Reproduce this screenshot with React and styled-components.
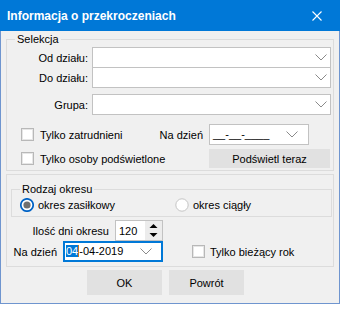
import React from 'react';
import styled, { createGlobalStyle } from 'styled-components';

const Global = createGlobalStyle`
  html, body { margin: 0; padding: 0; background: #ffffff; }
  body {
    font-family: "Liberation Sans", Arial, sans-serif;
    font-size: 11px;
    color: #000;
  }
  * { box-sizing: border-box; }
`;

const Window = styled.div`
  width: 340px;
  height: 304px;
  background: #f0f0f0;
  border: 1px solid #6f95cf;
  border-top: none;
  display: flex;
  flex-direction: column;
`;

const TitleBar = styled.div`
  height: 31px;
  margin: 0 -1px;
  background: #0078d7;
  color: #fff;
  font-weight: bold;
  font-size: 12px;
  display: flex;
  align-items: center;
  justify-content: space-between;
  padding: 0 18px 0 7px;
`;

const Body = styled.div`
  padding: 0 5px 8px 5px;
  display: flex;
  flex-direction: column;
`;

const Group = styled.fieldset`
  margin: 0;
  padding: 0 ${p => p.$pr ?? 2}px ${p => p.$pb ?? 2}px 0;
  border: 1px solid #dcdcdc;
  min-width: 0;
`;

const Legend = styled.legend`
  margin-left: 8px;
  padding: 0 2px;
  line-height: 16px;
  font-size: 11px;
`;

const Panel = styled.div`
  margin-top: 3px;
  border: 1px solid #dcdcdc;
  padding: 6px 1px 4px 4px;
  display: flex;
  flex-direction: column;
`;

const FieldRow = styled.div`
  display: grid;
  grid-template-columns: 81px 239px;
  column-gap: 4px;
  align-items: center;
  height: 21px;
  margin-top: ${p => p.$mt || 0}px;
`;

const Label = styled.span`
  text-align: right;
  white-space: nowrap;
  ${p => p.$w ? `width: ${p.$w}px; flex: none; margin-right: 6px;` : ''}
`;

const Combo = styled.div`
  height: 21px;
  width: ${p => p.$w ? `${p.$w}px` : 'auto'};
  flex: none;
  background: #fff;
  border: ${p => p.$focus ? '2px solid #0078d7' : '1px solid #c2c2c2'};
  display: flex;
  align-items: center;
  padding-left: ${p => p.$focus ? 1 : 3}px;
  padding-right: ${p => p.$pr ?? 3}px;
  margin-right: ${p => p.$mr || 0}px;
  white-space: nowrap;
`;

const ComboText = styled.span`
  flex: 1;
  line-height: 15px;
`;

const Selected = styled.span`
  background: #0078d7;
  color: #fff;
  border-right: 1px solid #c8751e;
`;

const CheckRow = styled.div`
  display: flex;
  align-items: center;
  height: ${p => p.$h || 21}px;
  margin-top: ${p => p.$mt || 0}px;
  padding-left: 14px;
`;

const CheckItem = styled.label`
  display: flex;
  align-items: center;
  flex: ${p => p.$grow ? 1 : 'none'};
  margin-left: ${p => p.$ml || 0}px;
  white-space: nowrap;
`;

const Box = styled.span`
  width: 13px;
  height: 13px;
  flex: none;
  background: #fff;
  border: 1px solid #b8b8b8;
  box-shadow: inset 0 0 0 1px #e6e6e6;
  margin-right: ${p => p.$gap ?? 6}px;
`;

const Button = styled.div`
  height: ${p => p.$h || 25}px;
  width: ${p => p.$w || 75}px;
  flex: none;
  background: #e1e1e1;
  border: 1px solid #e1e1e1;
  display: flex;
  align-items: center;
  justify-content: center;
  margin-right: ${p => p.$mr || 0}px;
`;

const RadioRow = styled.div`
  display: flex;
  align-items: center;
  height: 15px;
  padding-left: 8px;
  margin-bottom: 2px;
`;

const RadioItem = styled.label`
  display: flex;
  align-items: center;
  width: ${p => p.$w ? `${p.$w}px` : 'auto'};
  gap: 4px;
  white-space: nowrap;
`;

const Row = styled.div`
  display: flex;
  align-items: center;
  height: 21px;
  margin-top: ${p => p.$mt || 0}px;
`;

const Spinner = styled.div`
  width: 48px;
  height: 21px;
  background: #fff;
  border: 1px solid #c2c2c2;
  display: flex;
  align-items: stretch;
`;

const SpinText = styled.span`
  flex: 1;
  padding-left: 3px;
  display: flex;
  align-items: center;
`;

const SpinArrows = styled.div`
  width: 17px;
  background: #ececec;
  display: flex;
  align-items: center;
  justify-content: center;
`;

const Buttons = styled.div`
  display: flex;
  gap: 7px;
  margin-top: 3px;
  padding-left: 81px;
`;

const Chevron = () => (
  <svg width="12" height="7" viewBox="0 0 12 7">
    <polyline points="0.5,0.5 6,6 11.5,0.5" fill="none" stroke="#8a8a8a" strokeWidth="1" />
  </svg>
);

const Close = () => (
  <svg width="10" height="10" viewBox="0 0 10 10">
    <path d="M0.5 0.5 L9.5 9.5 M9.5 0.5 L0.5 9.5" stroke="#fff" strokeWidth="1.1" />
  </svg>
);

const Radio = ({ on }) => (
  <svg width="14" height="14" viewBox="0 0 14 14">
    <circle cx="7" cy="7" r="6.2" fill="#fff" stroke={on ? '#0063c6' : '#c4c4c4'} strokeWidth={on ? 1.7 : 1} />
    {on && <circle cx="7" cy="7" r="3.6" fill="#707070" />}
  </svg>
);

const Arrows = () => (
  <svg width="9" height="15" viewBox="0 0 9 15">
    <polygon points="4.5,1 8.5,5 0.5,5" fill="#000" />
    <polygon points="0.5,10 8.5,10 4.5,14" fill="#000" />
  </svg>
);

export default function App() {
  return (
    <>
      <Global />
      <Window>
        <TitleBar>
          <span>Informacja o przekroczeniach</span>
          <Close />
        </TitleBar>
        <Body>
          <Group>
            <Legend>Selekcja</Legend>
            <FieldRow>
              <Label>Od działu:</Label>
              <Combo><ComboText /><Chevron /></Combo>
            </FieldRow>
            <FieldRow $mt={-1}>
              <Label>Do działu:</Label>
              <Combo><ComboText /><Chevron /></Combo>
            </FieldRow>
            <FieldRow $mt={6}>
              <Label>Grupa:</Label>
              <Combo><ComboText /><Chevron /></Combo>
            </FieldRow>
            <CheckRow $mt={9}>
              <CheckItem $grow><Box />Tylko zatrudnieni</CheckItem>
              <Label $w={52}>Na dzień</Label>
              <Combo $w={100} $pr={10} $mr={22}><ComboText>__-__-____</ComboText><Chevron /></Combo>
            </CheckRow>
            <CheckRow $mt={4} $h={19}>
              <CheckItem $grow><Box />Tylko osoby podświetlone</CheckItem>
              <Button $w={121} $h={19} $mr={1}>Podświetl teraz</Button>
            </CheckRow>
          </Group>
          <Panel>
            <Group $pr={0} $pb={2}>
              <Legend>Rodzaj okresu</Legend>
              <RadioRow>
                <RadioItem $w={155}><Radio on />okres zasiłkowy</RadioItem>
                <RadioItem><Radio />okres ciągły</RadioItem>
              </RadioRow>
            </Group>
            <Row $mt={3}>
              <Label $w={98}>Ilość dni okresu</Label>
              <Spinner>
                <SpinText>120</SpinText>
                <SpinArrows><Arrows /></SpinArrows>
              </Spinner>
            </Row>
            <Row>
              <Label $w={46}>Na dzień</Label>
              <Combo $w={100} $focus $pr={9}>
                <ComboText><Selected>04</Selected>-04-2019</ComboText>
                <Chevron />
              </Combo>
              <CheckItem $ml={29}><Box $gap={5} />Tylko bieżący rok</CheckItem>
            </Row>
          </Panel>
          <Buttons>
            <Button>OK</Button>
            <Button>Powrót</Button>
          </Buttons>
        </Body>
      </Window>
    </>
  );
}
